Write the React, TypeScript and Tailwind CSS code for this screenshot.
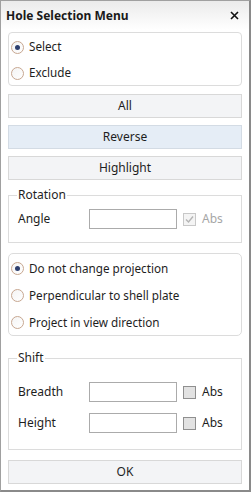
import React, { useState } from 'react';

const font = { fontFamily: '"Noto Sans", "DejaVu Sans", sans-serif' };

const Radio: React.FC<{ checked: boolean; label: string; onClick: () => void; tall?: boolean }> = ({ checked, label, onClick, tall }) => (
  <div onClick={onClick} className={`${tall ? 'h-[27px]' : 'h-[26px]'} flex items-center cursor-pointer`}>
    <span className="w-[13px] h-[13px] rounded-full border border-[#c7a791] bg-gradient-to-br from-[#f4f4f4] to-white flex items-center justify-center shrink-0">
      {checked && <span className="w-[5px] h-[5px] rounded-full bg-[#2d3f6e]" />}
    </span>
    <span className="ml-[5px] text-[11.7px] text-[#1e1e1e] leading-none">{label}</span>
  </div>
);

const Check: React.FC<{ checked?: boolean; disabled?: boolean }> = ({ checked, disabled }) => (
  <span className="flex items-center">
    <span className={`w-[13px] h-[13px] border flex items-center justify-center ${disabled ? 'border-[#c8c8c8] bg-[#f4f4f4]' : 'border-[#8f8f8f] bg-[#e2e2e2]'}`}>
      {checked && (
        <svg width="9" height="9" viewBox="0 0 9 9">
          <path d="M1 4.5 L3.5 7 L8 1.5" fill="none" stroke="#b4b4b4" strokeWidth="1.4" />
        </svg>
      )}
    </span>
    <span className={`ml-[6px] text-[12px] ${disabled ? 'text-[#a6a6a6]' : 'text-[#1e1e1e]'}`}>Abs</span>
  </span>
);

const Btn: React.FC<{ label: string; active?: boolean }> = ({ label, active }) => (
  <button
    className={`w-full h-[24px] border text-[12px] text-[#1e1e1e] ${active ? 'bg-[#e5edf6] border-[#d3dbe4]' : 'bg-[#f3f4f6] border-[#d8d8d8]'}`}
  >
    {label}
  </button>
);

const Field: React.FC<{ label: string; disabled?: boolean; checked?: boolean }> = ({ label, disabled, checked }) => (
  <div className="flex items-center h-[20px]">
    <span className="w-[80px] pl-[9px] text-[12px] text-[#1e1e1e]">{label}</span>
    <input className="w-[88px] h-[20px] border border-[#ababab] bg-white outline-none" />
    <span className="ml-[6px]">
      <Check checked={checked} disabled={disabled} />
    </span>
  </div>
);

export default function App() {
  const [mode, setMode] = useState<'select' | 'exclude'>('select');
  const [proj, setProj] = useState(0);

  return (
    <div style={font} className="w-[251px] h-[492px] bg-white border-l border-t border-[#a0a0a0] border-r-2 border-b-2 border-r-[#8a8a8a] border-b-[#8a8a8a] flex flex-col overflow-hidden">
      <div className="h-[29px] shrink-0 flex items-center justify-between pl-[5px] pr-[10px] bg-gradient-to-b from-[#ebebeb] to-white">
        <span className="text-[12px] font-bold text-[#1a1a1a]">Hole Selection Menu</span>
        <svg width="9" height="9" viewBox="0 0 9 9">
          <path d="M1 1 L8 8 M8 1 L1 8" stroke="#111" strokeWidth="1.6" />
        </svg>
      </div>

      <div className="px-[7px] flex flex-col">
        <div className="mt-[2px] h-[54px] border border-[#dcdcdc] rounded-[4px] pl-[2px] pt-[1px]">
          <Radio label="Select" checked={mode === 'select'} onClick={() => setMode('select')} />
          <Radio label="Exclude" checked={mode === 'exclude'} onClick={() => setMode('exclude')} />
        </div>

        <div className="mt-[8px] flex flex-col gap-[7px]">
          <Btn label="All" />
          <Btn label="Reverse" active />
          <Btn label="Highlight" />
        </div>

        <fieldset className="mt-[8px] h-[55px] border border-[#dcdcdc] px-0 pt-0">
          <legend className="ml-[8px] px-[1px] text-[12px] text-[#1e1e1e] leading-[14px]">Rotation</legend>
          <div className="mt-[7px]">
            <Field label="Angle" disabled checked />
          </div>
        </fieldset>

        <div className="mt-[10px] h-[83px] border border-[#dcdcdc] rounded-[5px] pl-[2px] pt-[1px]">
          {['Do not change projection', 'Perpendicular to shell plate', 'Project in view direction'].map((t, i) => (
            <Radio key={t} tall label={t} checked={proj === i} onClick={() => setProj(i)} />
          ))}
        </div>

        <fieldset className="mt-[15px] h-[99px] border border-[#dcdcdc] px-0 pt-0">
          <legend className="ml-[8px] px-[1px] text-[12px] text-[#1e1e1e] leading-[14px]">Shift</legend>
          <div className="mt-[17px] flex flex-col gap-[11px]">
            <Field label="Breadth" />
            <Field label="Height" />
          </div>
        </fieldset>

        <div className="mt-[8px] h-[24px]">
          <Btn label="OK" />
        </div>
      </div>
    </div>
  );
}
